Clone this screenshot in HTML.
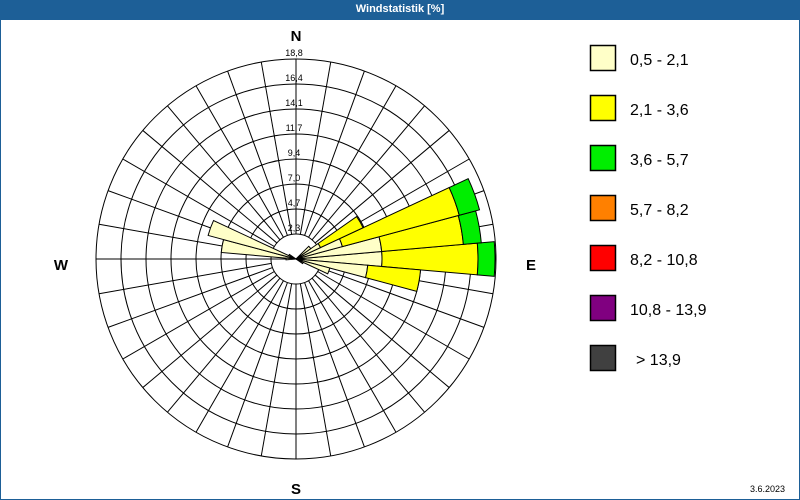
<!DOCTYPE html>
<html><head><meta charset="utf-8"><style>
html,body{margin:0;padding:0;width:800px;height:500px;overflow:hidden;background:#fff;font-family:"Liberation Sans",sans-serif}
#bar{position:absolute;left:0;top:0;width:800px;height:20px;background:#1d5f97;color:#fff;font-size:11px;font-weight:bold;text-align:center;line-height:19px}
#frame{position:absolute;left:0;top:20px;width:798px;height:479px;border:1px solid #1d5f97;border-top:none}
svg{position:absolute;left:0;top:0}
</style></head><body>
<div id="bar">Windstatistik [%]</div>
<div id="frame"></div>
<svg id="s" width="800" height="500" xmlns="http://www.w3.org/2000/svg" font-family="Liberation Sans, sans-serif">
<g id="grid" stroke="#000" stroke-width="1" fill="none"></g>
<g id="bars" stroke="#000" stroke-width="1"></g>
<g font-size="9" fill="#000" text-anchor="middle">
<text x="294" y="56">18,8</text><text x="294" y="81">16,4</text><text x="294" y="106">14,1</text>
<text x="294" y="131">11,7</text><text x="294" y="156">9,4</text><text x="294" y="181">7,0</text>
<text x="294" y="206">4,7</text><text x="294" y="231">2,3</text>
</g>
<g font-size="15" font-weight="bold" text-anchor="middle">
<text x="296" y="41">N</text><text x="296" y="494">S</text><text x="61" y="270">W</text><text x="531" y="270">E</text>
</g>
<g stroke="#000" stroke-width="1.5">
<rect x="590.5" y="45.5" width="25" height="25" fill="#ffffc8"/>
<rect x="590.5" y="95.5" width="25" height="25" fill="#ffff00"/>
<rect x="590.5" y="145.5" width="25" height="25" fill="#00ee00"/>
<rect x="590.5" y="195.5" width="25" height="25" fill="#ff8000"/>
<rect x="590.5" y="245.5" width="25" height="25" fill="#ff0000"/>
<rect x="590.5" y="295.5" width="25" height="25" fill="#800080"/>
<rect x="590.5" y="345.5" width="25" height="25" fill="#404040"/>
</g>
<g font-size="16" fill="#000">
<text x="630" y="65">0,5 - 2,1</text><text x="630" y="115">2,1 - 3,6</text>
<text x="630" y="165">3,6 - 5,7</text><text x="630" y="215">5,7 - 8,2</text>
<text x="630" y="265">8,2 - 10,8</text><text x="630" y="315">10,8 - 13,9</text>
<text x="636" y="365">&gt; 13,9</text>
</g>
<text x="785" y="492" font-size="9" text-anchor="end">3.6.2023</text>
</svg>
<script>
var cx=296,cy=259,NS="http://www.w3.org/2000/svg";
function el(t,a,p){var e=document.createElementNS(NS,t);for(var k in a)e.setAttribute(k,a[k]);p.appendChild(e);return e;}
var g=document.getElementById('grid'),b=document.getElementById('bars');
function pt(r,d){var a=d*Math.PI/180;return [cx+r*Math.sin(a),cy-r*Math.cos(a)];}
for(var k=1;k<=8;k++)el('circle',{cx:cx,cy:cy,r:25*k},g);
for(var d=0;d<360;d+=10){var p1=pt(25,d),p2=pt(200,d);el('line',{x1:p1[0],y1:p1[1],x2:p2[0],y2:p2[1]},g);}
el('line',{x1:cx-200,y1:cy,x2:cx,y2:cy},g);
function wedge(d,r0,r1,c){var a=pt(r0,d-5),bb=pt(r1,d-5),cc=pt(r1,d+5),dd=pt(r0,d+5);
var s='M'+a+' L'+bb+' A'+r1+' '+r1+' 0 0 1 '+cc+' L'+dd+(r0>0?' A'+r0+' '+r0+' 0 0 0 '+a:'')+'Z';
el('path',{d:s,fill:c},b);}
var C='#ffffc8',Y='#ffff00',G='#00ee00';
var data=[[90,[86,C],[182,Y],[199,G]],[80,[86,C],[168,Y],[186,G]],[70,[48,C],[169,Y],[190,G]],
[60,[27,C],[74,Y]],[100,[72,C],[125,Y]],[110,[35,C]],[50,[18,C]],[280,[75,C]],[290,[91,C]],[270,[10,C]],[120,[8,C]],[300,[8,C]]];
data.forEach(function(x){var r0=0;for(var i=1;i<x.length;i++){wedge(x[0],r0,x[i][0],x[i][1]);r0=x[i][0];}});
</script>
</body></html>
